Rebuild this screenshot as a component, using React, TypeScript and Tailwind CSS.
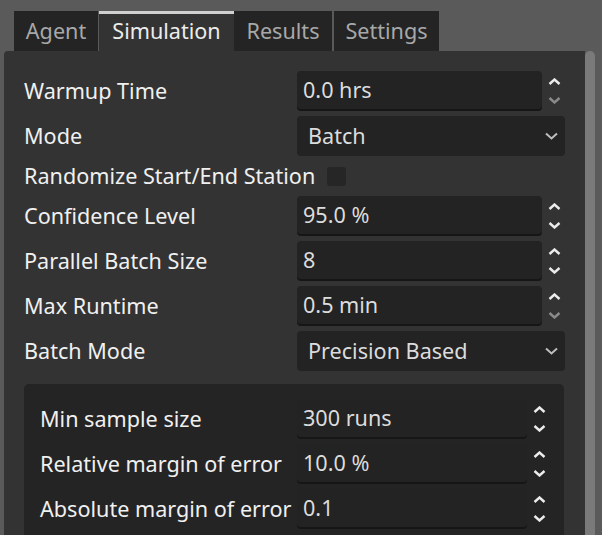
import React from "react";

const Up = ({ dim }: { dim?: boolean }) => (
  <svg width="13" height="7" viewBox="0 0 13 7" className={dim ? "text-[#8a8a8a]" : "text-[#ececec]"}>
    <polyline points="1.5,6 6.5,1.5 11.5,6" fill="none" stroke="currentColor" strokeWidth="2.4" />
  </svg>
);

const Down = ({ dim }: { dim?: boolean }) => (
  <svg width="13" height="7" viewBox="0 0 13 7" className={dim ? "text-[#8a8a8a]" : "text-[#ececec]"}>
    <polyline points="1.5,1 6.5,5.5 11.5,1" fill="none" stroke="currentColor" strokeWidth="2.4" />
  </svg>
);

const SpinBox = ({ value, width, downDim }: { value: string; width: string; downDim?: boolean }) => (
  <div className="flex items-center h-[40px]">
    <div
      className={`${width} h-[38px] mb-[2px] bg-[#232323] rounded-[4px] shadow-[0_2px_0_#161616] flex items-center pl-[6px] text-[#dcdcdc]`}
    >
      {value}
    </div>
    <div className="w-[23px] flex flex-col items-center gap-[12px] pl-[1px]">
      <Up />
      <Down dim={downDim} />
    </div>
  </div>
);

const Select = ({ value }: { value: string }) => (
  <div className="w-[268px] h-[40px] bg-[#232323] rounded-[4px] flex items-center justify-between pl-[11px] pr-[7px] text-[#dcdcdc]">
    <span>{value}</span>
    <svg width="13" height="8" viewBox="0 0 13 8" className="text-[#bdbdbd]">
      <polyline points="1,1.5 6.5,6.5 12,1.5" fill="none" stroke="currentColor" strokeWidth="2" />
    </svg>
  </div>
);

const Row = ({ label, children }: { label: string; children: React.ReactNode }) => (
  <div className="flex items-center h-[40px]">
    <div className="w-[273px] text-[#f0f0f0]">{label}</div>
    {children}
  </div>
);

const SubRow = ({ label, children }: { label: string; children: React.ReactNode }) => (
  <div className="flex items-center h-[40px]">
    <div className="w-[257px] text-[#f0f0f0] whitespace-nowrap">{label}</div>
    {children}
  </div>
);

export default function App() {
  return (
    <div className="w-[602px] h-[535px] overflow-hidden bg-[#5a5a5a] font-['Noto_Sans',sans-serif] text-[21.6px] leading-none">
      <div className="flex pl-[14px] pt-[11px] h-[51px]">
        <div className="w-[84px] h-[40px] bg-[#242424] text-[#a8a8a8] flex items-center justify-center">Agent</div>
        <div className="ml-[1px] w-[135px] h-[40px] bg-[#333333] border-t-[3px] border-[#d0d0d0] text-[#ececec] flex items-center justify-center pb-[3px]">
          Simulation
        </div>
        <div className="w-[98px] h-[40px] bg-[#242424] text-[#a8a8a8] flex items-center justify-center">Results</div>
        <div className="ml-[2px] w-[105px] h-[40px] bg-[#242424] text-[#a8a8a8] flex items-center justify-center">Settings</div>
      </div>
      <div className="flex h-[484px]">
        <div className="ml-[4px] w-[581px] bg-[#333333] rounded-tl-[4px] pl-[20px] pt-[20px] flex flex-col gap-[5px]">
          <Row label="Warmup Time">
            <SpinBox value="0.0 hrs" width="w-[245px]" downDim />
          </Row>
          <Row label="Mode">
            <Select value="Batch" />
          </Row>
          <div className="flex items-center h-[30px] gap-[12px]">
            <span className="text-[#f0f0f0]">Randomize Start/End Station</span>
            <div className="w-[19px] h-[19px] bg-[#262626] rounded-[3px]" />
          </div>
          <Row label="Confidence Level">
            <SpinBox value="95.0 %" width="w-[245px]" />
          </Row>
          <Row label="Parallel Batch Size">
            <SpinBox value="8" width="w-[245px]" />
          </Row>
          <Row label="Max Runtime">
            <SpinBox value="0.5 min" width="w-[245px]" downDim />
          </Row>
          <Row label="Batch Mode">
            <Select value="Precision Based" />
          </Row>
          <div className="mt-[8px] w-[540px] flex-1 bg-[#242424] rounded-t-[5px] pl-[16px] pt-[15px] flex flex-col gap-[5px]">
            <SubRow label="Min sample size">
              <SpinBox value="300 runs" width="w-[230px]" />
            </SubRow>
            <SubRow label="Relative margin of error">
              <SpinBox value="10.0 %" width="w-[230px]" />
            </SubRow>
            <SubRow label="Absolute margin of error">
              <SpinBox value="0.1" width="w-[230px]" />
            </SubRow>
          </div>
        </div>
        <div className="w-[10px] bg-[#7a7a7a] rounded-t-full" />
      </div>
    </div>
  );
}
